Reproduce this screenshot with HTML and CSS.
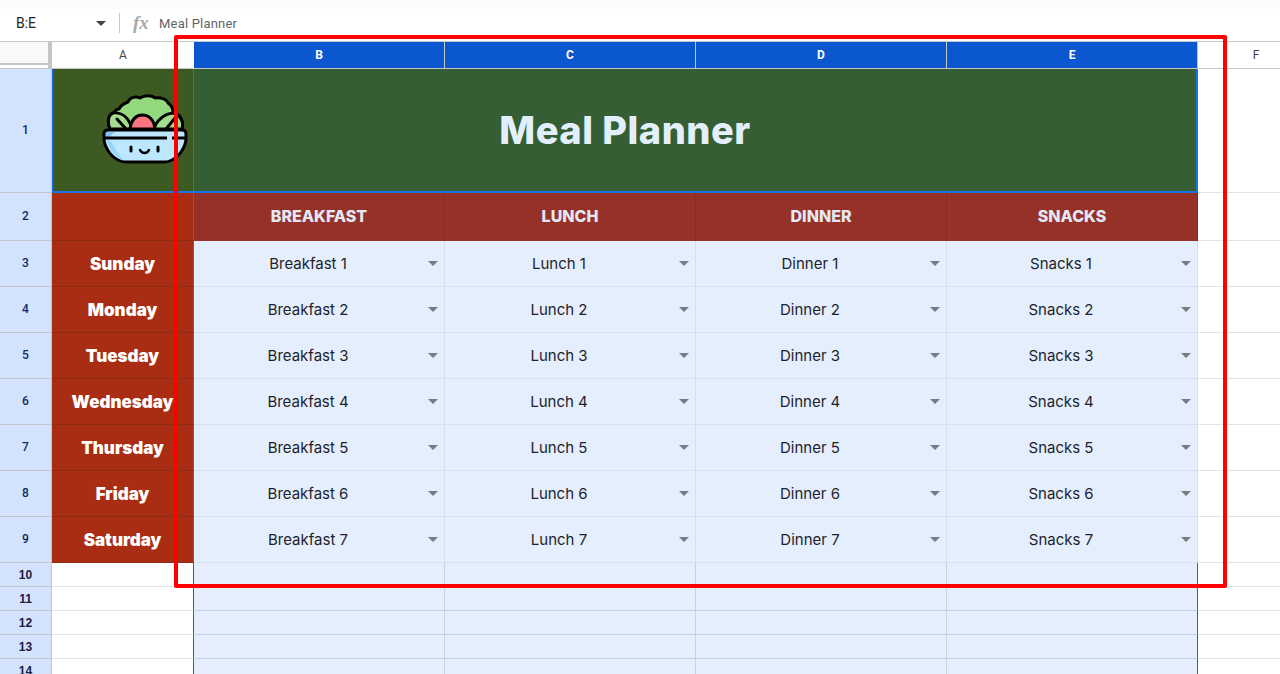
FILE: index.html
```html
<!DOCTYPE html>
<html lang="en">
  <head>
    <meta charset="UTF-8" />
    <title>Meal Planner</title>
    <link rel="stylesheet" href="styles.css">
  </head>
  <body>
    <div class="topstrip"></div>
    <div class="formula-bar">
      <div class="name-box">B:E</div>
      <span class="name-arrow"></span>
      <span class="bar-divider"></span>
      <span class="fx">fx</span>
      <span class="formula-text">Meal Planner</span>
    </div>

    <div class="sheet">
      <div class="corner"></div>
      <div class="col-head">A</div>
      <div class="col-head sel">B</div>
      <div class="col-head sel">C</div>
      <div class="col-head sel">D</div>
      <div class="col-head sel">E</div>
      <div class="col-head">F</div>

      <div class="row-head">1</div>
      <div class="logo-cell">
        <svg class="salad" width="86" height="71" viewBox="0 0 86 71">
          <path d="M8 35 C5 28 6 21 12 19 C13 17 15 15 17 15 C19 11 23 9 26 8 C28 3 34 2 38 4 C42 1 50 1 53 4 C58 3 65 5 66 9 C69 11 71 14 71 18 C78 20 82 27 80 35 Z" fill="#93d97e" stroke="#000" stroke-width="3" stroke-linejoin="round"/>
          <path d="M8 35 C5 28 6 21 11 19 C20 18 27 24 30 35 Z" fill="#a5dd8f" stroke="#000" stroke-width="3" stroke-linejoin="round"/>
          <path d="M52 35 C54 27 62 20 71 19 C78 21 82 27 80 35 Z" fill="#a5dd8f" stroke="#000" stroke-width="3" stroke-linejoin="round"/>
          <path d="M28 35 C29 26 34 21 40 21 C47 21 52 26 53 35 Z" fill="#fb7482" stroke="#000" stroke-width="3"/>
          <path d="M15 25 L24 35 M73 24 L64 35" stroke="#000" stroke-width="3" stroke-linecap="round"/>
          <path d="M6 36 H80 C83 36 84 38 84 40 V44 C84 52 78 62 70 66 C68 67 66 68 63 68 H23 C20 68 18 67 16 66 C8 62 2 52 2 44 V40 C2 38 3 36 6 36 Z" fill="#bde6ff" stroke="#000" stroke-width="3"/>
          <path d="M4 38 H14 C10 39 8 42 9 43 H4 Z" fill="#84c3f2"/>
          <path d="M5 46 C10 46 12 53 16 59 C18 62 20 64 22 66 C14 64 6 55 5 46 Z" fill="#9ad6fb"/>
          <path d="M2 44 H65 M70 44 H84" stroke="#000" stroke-width="3"/>
          <path d="M29 53 V57 M56 53 V57" stroke="#000" stroke-width="3" stroke-linecap="round"/>
          <path d="M38 56 C40 60 45 60 47 56" fill="none" stroke="#000" stroke-width="2.5" stroke-linecap="round"/>
        </svg>
      </div>
      <div class="title-cell">Meal Planner</div>
      <div class="blank"></div>

      <div class="row-head">2</div>
      <div class="day"></div>
      <div class="meal-head">BREAKFAST</div>
      <div class="meal-head">LUNCH</div>
      <div class="meal-head">DINNER</div>
      <div class="meal-head">SNACKS</div>
      <div class="blank"></div>

      <div class="row-head">3</div>
      <div class="day">Sunday</div>
      <div class="pick"><span>Breakfast 1</span><i></i></div>
      <div class="pick"><span>Lunch 1</span><i></i></div>
      <div class="pick"><span>Dinner 1</span><i></i></div>
      <div class="pick"><span>Snacks 1</span><i></i></div>
      <div class="blank"></div>

      <div class="row-head">4</div>
      <div class="day">Monday</div>
      <div class="pick"><span>Breakfast 2</span><i></i></div>
      <div class="pick"><span>Lunch 2</span><i></i></div>
      <div class="pick"><span>Dinner 2</span><i></i></div>
      <div class="pick"><span>Snacks 2</span><i></i></div>
      <div class="blank"></div>

      <div class="row-head">5</div>
      <div class="day">Tuesday</div>
      <div class="pick"><span>Breakfast 3</span><i></i></div>
      <div class="pick"><span>Lunch 3</span><i></i></div>
      <div class="pick"><span>Dinner 3</span><i></i></div>
      <div class="pick"><span>Snacks 3</span><i></i></div>
      <div class="blank"></div>

      <div class="row-head">6</div>
      <div class="day">Wednesday</div>
      <div class="pick"><span>Breakfast 4</span><i></i></div>
      <div class="pick"><span>Lunch 4</span><i></i></div>
      <div class="pick"><span>Dinner 4</span><i></i></div>
      <div class="pick"><span>Snacks 4</span><i></i></div>
      <div class="blank"></div>

      <div class="row-head">7</div>
      <div class="day">Thursday</div>
      <div class="pick"><span>Breakfast 5</span><i></i></div>
      <div class="pick"><span>Lunch 5</span><i></i></div>
      <div class="pick"><span>Dinner 5</span><i></i></div>
      <div class="pick"><span>Snacks 5</span><i></i></div>
      <div class="blank"></div>

      <div class="row-head">8</div>
      <div class="day">Friday</div>
      <div class="pick"><span>Breakfast 6</span><i></i></div>
      <div class="pick"><span>Lunch 6</span><i></i></div>
      <div class="pick"><span>Dinner 6</span><i></i></div>
      <div class="pick"><span>Snacks 6</span><i></i></div>
      <div class="blank"></div>

      <div class="row-head">9</div>
      <div class="day">Saturday</div>
      <div class="pick"><span>Breakfast 7</span><i></i></div>
      <div class="pick"><span>Lunch 7</span><i></i></div>
      <div class="pick"><span>Dinner 7</span><i></i></div>
      <div class="pick"><span>Snacks 7</span><i></i></div>
      <div class="blank"></div>

      <div class="row-head small">10</div>
      <div class="blank edge"></div>
      <div class="empty"></div>
      <div class="empty"></div>
      <div class="empty"></div>
      <div class="empty end"></div>
      <div class="blank"></div>

      <div class="row-head small">11</div>
      <div class="blank edge"></div>
      <div class="empty dark"></div>
      <div class="empty dark"></div>
      <div class="empty dark"></div>
      <div class="empty end dark"></div>
      <div class="blank"></div>

      <div class="row-head small">12</div>
      <div class="blank edge"></div>
      <div class="empty dark"></div>
      <div class="empty dark"></div>
      <div class="empty dark"></div>
      <div class="empty end dark"></div>
      <div class="blank"></div>

      <div class="row-head small">13</div>
      <div class="blank edge"></div>
      <div class="empty dark"></div>
      <div class="empty dark"></div>
      <div class="empty dark"></div>
      <div class="empty end dark"></div>
      <div class="blank"></div>

      <div class="row-head small">14</div>
      <div class="blank edge"></div>
      <div class="empty dark"></div>
      <div class="empty dark"></div>
      <div class="empty dark"></div>
      <div class="empty end dark"></div>
      <div class="blank"></div>
    </div>

    <div class="red-box"></div>
  </body>
</html>
```

FILE: styles.css
```css
*{
    margin: 0px;
    padding: 0px;
    box-sizing: border-box;
}
html, body{
    height: 674px;
    overflow: hidden;
}
body{
    background: #fff;
    font-family: "Roboto", "Liberation Sans", sans-serif;
    position: relative;
}
.topstrip{
    height: 9px;
    background: #f9fbfd;
}

/* formula bar */
.formula-bar{
    height: 32px;
    padding-bottom: 4px;
    display: flex;
    align-items: center;
    background: #fff;
    color: #444;
}
.name-box{
    width: 96px;
    padding-left: 16px;
    font-size: 14px;
    color: #1f1f1f;
}
.name-arrow{
    width: 0;
    height: 0;
    border-left: 5px solid transparent;
    border-right: 5px solid transparent;
    border-top: 5px solid #444;
}
.bar-divider{
    width: 1px;
    height: 20px;
    background: #c7c7c7;
    margin-left: 13px;
    margin-right: 13px;
}
.fx{
    width: 26px;
    font-family: "Liberation Serif", serif;
    font-style: italic;
    font-size: 19px;
    font-weight: 700;
    color: #a8a8a8;
}
.formula-text{
    font-size: 13px;
    color: #5f6368;
    letter-spacing: 0.2px;
}

/* the grid itself */
.sheet{
    display: grid;
    grid-template-columns: 52px 142px repeat(4, 251px) 116px;
    grid-template-rows: 28px 124px 48px repeat(7, 46px) repeat(5, 24px);
    height: 633px;
    overflow: hidden;
}
.corner{
    background: linear-gradient(#f8f9fa 21px, #c4c7c5 21px, #c4c7c5 23px, #fff 23px);
    border-bottom: 1px solid #c4c7c5;
    border-right: 4px solid #c4c7c5;
    border-top: 1px solid #c4c7c5;
}
.col-head{
    display: flex;
    align-items: center;
    justify-content: center;
    font-size: 12px;
    color: #444;
    background: #fff;
    border-top: 1px solid #c4c7c5;
    border-bottom: 1px solid #c4c7c5;
}
.col-head.sel{
    background: #0b57d0;
    color: #fff;
    font-weight: 700;
    border-right: 1px solid #c4c7c5;
}
.row-head{
    display: flex;
    align-items: center;
    justify-content: center;
    padding-bottom: 2px;
    font-size: 12px;
    font-weight: 500;
    color: #0b2a66;
    background: #d3e3fd;
    border-bottom: 1px solid #c4c7c5;
    border-right: 1px solid #c4c7c5;
}
.row-head.small{
    font-family: "Liberation Sans", sans-serif;
    font-weight: 700;
    color: #1c1c3c;
    padding-bottom: 0;
    align-items: flex-start;
    padding-top: 5px;
}

/* row 1 */
.logo-cell{
    display: flex;
    align-items: center;
    padding-left: 49px;
    background: #3c5a21;
    border: 1px solid #1a73e8;
    border-width: 0 1px 2px 1px;
}
.salad{
    margin-top: -2px;
}
.title-cell{
    grid-column: span 4;
    display: flex;
    align-items: center;
    justify-content: center;
    padding-right: 140px;
    background: #355e35;
    border: 1px solid #1a73e8;
    border-width: 0 2px 2px 0;
    color: #e3f0fb;
    font-family: "Inter", sans-serif;
    font-size: 38px;
    font-weight: 800;
    letter-spacing: 0.5px;
}
.blank{
    background: #fff;
    border-bottom: 1px solid #e1e3e1;
}
.blank.edge{
    border-right: 1px solid #2b5fb0;
}

/* row 2 and the day names */
.day{
    display: flex;
    align-items: center;
    justify-content: center;
    background: #a82d12;
    border-bottom: 1px solid #8f2b14;
    border-right: 1px solid #2a6fc9;
    color: #fff;
    font-family: "Inter", sans-serif;
    font-size: 17px;
    font-weight: 900;
}
.meal-head{
    display: flex;
    align-items: center;
    justify-content: center;
    padding-bottom: 2px;
    background: #963128;
    border-right: 1px solid #8a2c24;
    color: #e3e8f6;
    font-family: "Inter", sans-serif;
    font-size: 16px;
    font-weight: 800;
}

/* dropdown cells */
.pick{
    display: flex;
    align-items: center;
    background: #e4eefd;
    border-right: 1px solid #d6e0f0;
    border-bottom: 1px solid #d6e0f0;
    color: #1d1f2b;
    font-family: "Inter", sans-serif;
    font-size: 15px;
}
.pick span{
    flex: 1;
    text-align: center;
}
.pick i{
    width: 0;
    height: 0;
    margin-right: 6px;
    margin-left: 6px;
    border-left: 5px solid transparent;
    border-right: 5px solid transparent;
    border-top: 5px solid #757c86;
}
.pick:nth-child(7n+6){
    border-right: 1px solid #1a6fd6;
}

/* empty rows under the table */
.empty{
    background: #e4eefd;
    border-right: 1px solid #c8d2e4;
    border-bottom: 1px solid #d6e0f0;
}
.empty.dark{
    border-bottom-color: #c5cfe2;
}
.empty.end{
    border-right: 1px solid #2b5fb0;
}

/* annotation drawn over the sheet */
.red-box{
    position: absolute;
    left: 174px;
    top: 35px;
    width: 1053px;
    height: 553px;
    border: 4px solid #ff0000;
    border-radius: 2px;
}
```
